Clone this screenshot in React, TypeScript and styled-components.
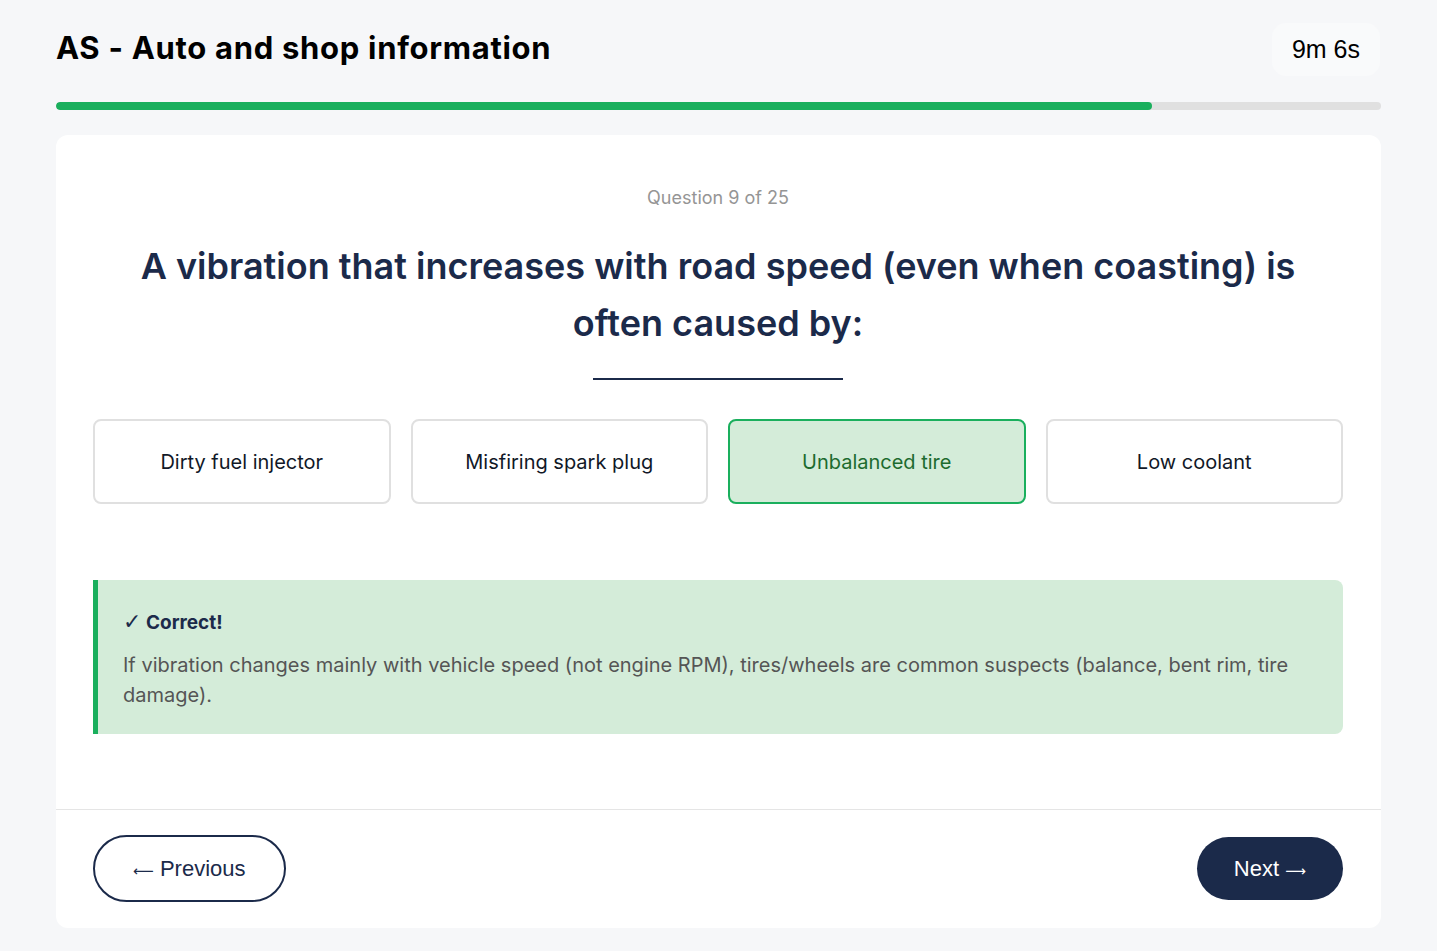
import React from 'react';
import styled, { createGlobalStyle } from 'styled-components';

const options = ['Dirty fuel injector', 'Misfiring spark plug', 'Unbalanced tire', 'Low coolant'];
const selected = 2;

const App = () => {
  return (
    <Page>
      <GlobalStyle />
      <Header>
        <Title>AS - Auto and shop information</Title>
        <Timer>9m 6s</Timer>
      </Header>
      <Track>
        <Fill style={{ width: '82.7%' }} />
      </Track>
      <Card>
        <Body>
          <Counter>Question 9 of 25</Counter>
          <Question>A vibration that increases with road speed (even when coasting) is often caused by:</Question>
          <Divider />
          <Options>
            {options.map((o, i) => (
              <Option key={o} $active={i === selected}>
                {o}
              </Option>
            ))}
          </Options>
          <Feedback>
            <FeedbackTitle>
              <Check>✓</Check> Correct!
            </FeedbackTitle>
            <FeedbackText>
              If vibration changes mainly with vehicle speed (not engine RPM), tires/wheels are common suspects (balance, bent rim, tire
              damage).
            </FeedbackText>
          </Feedback>
        </Body>
        <Footer>
          <PrevButton>
            <Arrow>⟵</Arrow> Previous
          </PrevButton>
          <NextButton>
            Next <Arrow>⟶</Arrow>
          </NextButton>
        </Footer>
      </Card>
    </Page>
  );
};

export default App;

const GlobalStyle = createGlobalStyle`
  body {
    margin: 0;
    background: #f6f7f9;
    font-family: Inter, 'Liberation Sans', sans-serif;
  }
`;
const Page = styled.div`
  padding: 22px 56px 24px;
  min-height: 951px;
  box-sizing: border-box;
`;
const Header = styled.div`
  display: flex;
  justify-content: space-between;
  align-items: center;
  height: 55px;
  padding-right: 1px;
`;
const Title = styled.h1`
  margin: 0 0 5px;
  font-family: Inter, sans-serif;
  font-size: 31px;
  font-weight: 700;
  color: #000;
  letter-spacing: 0.7px;
`;
const Timer = styled.div`
  background: #f9fafb;
  border-radius: 14px;
  padding: 12px 20px;
  font-family: 'Liberation Sans', Arial, sans-serif;
  font-size: 25px;
  color: #000;
`;
const Track = styled.div`
  margin-top: 25px;
  height: 8px;
  border-radius: 4px;
  background: #e0e0e0;
  overflow: hidden;
`;
const Fill = styled.div`
  height: 100%;
  background: #1aaf5d;
  border-radius: 4px;
`;
const Card = styled.div`
  margin-top: 25px;
  background: #fff;
  border-radius: 12px;
`;
const Body = styled.div`
  padding: 51px 38px 75px 37px;
  display: flex;
  flex-direction: column;
  align-items: center;
`;
const Counter = styled.div`
  font-size: 18px;
  line-height: 24px;
  color: #959595;
`;
const Question = styled.h2`
  margin: 28px 20px 0;
  font-size: 36px;
  line-height: 57px;
  font-weight: 600;
  color: #1b2a4a;
  text-align: center;
`;
const Divider = styled.div`
  margin-top: 26px;
  width: 250px;
  height: 2px;
  background: #1b2a4a;
`;
const Options = styled.div`
  margin-top: 39px;
  width: 100%;
  display: grid;
  grid-template-columns: repeat(4, 1fr);
  gap: 20px;
`;
const Option = styled.div<{ $active?: boolean }>`
  height: 85px;
  box-sizing: border-box;
  display: flex;
  align-items: center;
  justify-content: center;
  border: 2px solid ${(p) => (p.$active ? '#1aaf5d' : '#e0e0e0')};
  background: ${(p) => (p.$active ? '#d4ecd9' : '#fff')};
  color: ${(p) => (p.$active ? '#1d6b2f' : '#111827')};
  border-radius: 8px;
  font-size: 20px;
`;
const Feedback = styled.div`
  margin-top: 76px;
  width: 100%;
  box-sizing: border-box;
  background: #d4ecd9;
  border-left: 5px solid #1aaf5d;
  border-radius: 0 8px 8px 0;
  padding: 30px 40px 24px 25px;
`;
const FeedbackTitle = styled.div`
  font-size: 19px;
  font-weight: 700;
  color: #1b2a4a;
  line-height: 26px;
`;
const Check = styled.span`
  font-family: 'DejaVu Sans', sans-serif;
  font-weight: 700;
  font-size: 22px;
  line-height: 1;
`;
const FeedbackText = styled.p`
  margin: 14px 0 0;
  font-size: 20px;
  line-height: 30px;
  color: #555;
`;
const Footer = styled.div`
  border-top: 1px solid #e5e5e5;
  padding: 25px 38px 26px 37px;
  display: flex;
  justify-content: space-between;
  align-items: center;
`;
const Arrow = styled.span`
  font-family: 'DejaVu Sans', sans-serif;
  font-size: 14.5px;
`;
const PrevButton = styled.button`
  height: 67px;
  padding: 0 38px;
  border: 2px solid #1b2a4a;
  border-radius: 34px;
  background: #fff;
  color: #1b2a4a;
  font-family: 'Liberation Sans', Arial, sans-serif;
  font-size: 22px;
`;
const NextButton = styled.button`
  height: 63px;
  padding: 0 37px;
  border: none;
  border-radius: 32px;
  background: #1b2a4a;
  color: #fff;
  font-family: 'Liberation Sans', Arial, sans-serif;
  font-size: 22px;
`;
